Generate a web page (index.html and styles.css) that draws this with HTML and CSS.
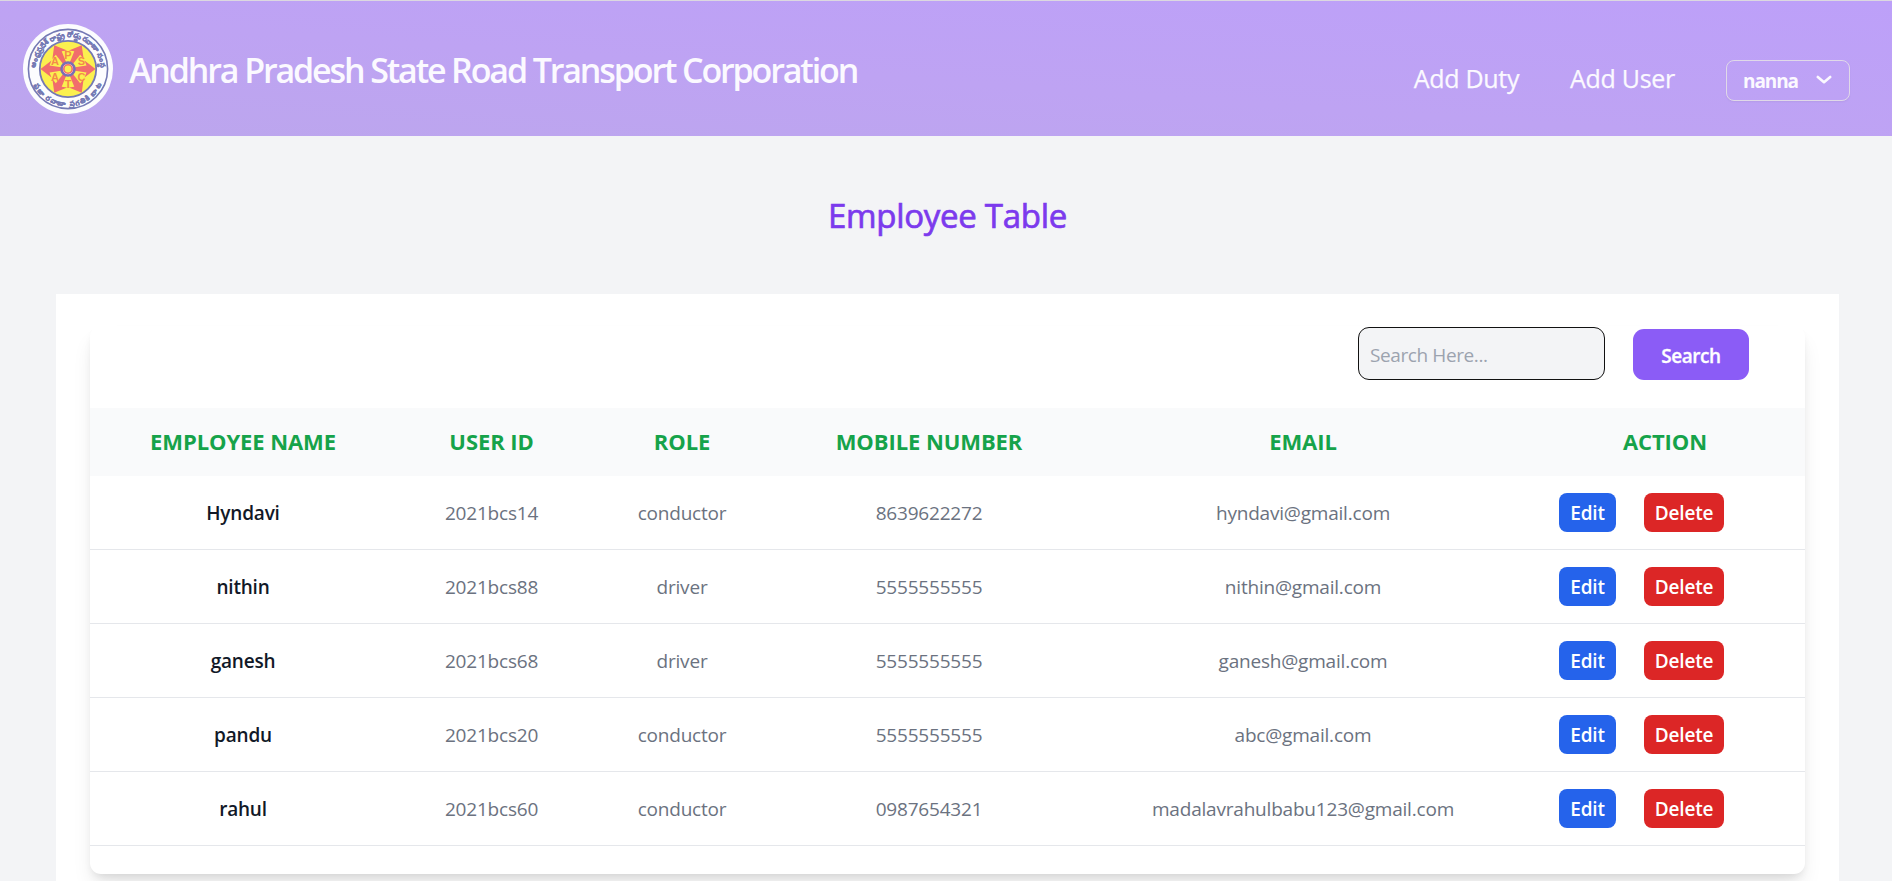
FILE: index.html
```html
<!DOCTYPE html>
<html lang="en">
<head>
<meta charset="utf-8">
<title>Employee Table</title>
<link rel="stylesheet" href="styles.css">
</head>
<body>
<header class="navbar">
  <a class="brand">
    <svg class="logo" viewBox="-45 -45 90 90" role="img" aria-label="APSRTC">
      <defs>
        <path id="arc-top" d="M-31.8 6 A32.3 32.3 0 1 1 31.8 6"/>
        <path id="arc-bottom" d="M-36.6 8 A37.5 37.5 0 0 0 36.6 8"/>
        <path id="arrow" d="M-1.8 -7 L-3.4 -18.5 L-8.5 -16.5 L0 -27.5 L8.5 -16.5 L3.4 -18.5 L1.8 -7 Z"/>
      </defs>
      <circle r="45" fill="#fcfcfe"/>
      <circle r="39.6" fill="none" stroke="#7479b4" stroke-width="1.6"/>
      <circle r="28.2" fill="#fbf04f" stroke="#7479b4" stroke-width="1.8"/>
      <g fill="#f16d6c">
        <use href="#arrow" transform="rotate(30)"/>
        <use href="#arrow" transform="rotate(90)"/>
        <use href="#arrow" transform="rotate(150)"/>
        <use href="#arrow" transform="rotate(210)"/>
        <use href="#arrow" transform="rotate(270)"/>
        <use href="#arrow" transform="rotate(330)"/>
      </g>
      <g class="logo-letters">
        <text x="0" y="-10.5">P</text>
        <text x="13.5" y="-4.5">S</text>
        <text x="-13" y="-4.5">A</text>
        <text x="13.5" y="11.5">C</text>
        <text x="0" y="18.5">T</text>
        <text x="-13" y="11.5">A</text>
      </g>
      <circle r="6.5" fill="#fff4ee" stroke="#7a6fb4" stroke-width="2.6"/>
      <circle r="4.2" fill="#fbf04f" stroke="#f16d6c" stroke-width="1.6"/>
      <text class="logo-ring"><textPath href="#arc-top" startOffset="50%" textLength="98">ఆంధ్రప్రదేశ్ రాష్ట్ర రోడ్డు రవాణా సంస్థ</textPath></text>
      <text class="logo-ring"><textPath href="#arc-bottom" startOffset="50%" textLength="84">ప్రజా రవాణా ప్రగతికి బాట</textPath></text>
    </svg>
    <span class="brand-name">Andhra Pradesh State Road Transport Corporation</span>
  </a>
  <nav class="nav">
    <a class="nav-link">Add Duty</a>
    <a class="nav-link">Add User</a>
    <button class="user-menu">nanna
      <svg class="chevron" viewBox="0 0 16 10"><path d="M1.8 2 L8 7.2 L14.2 2"/></svg>
    </button>
  </nav>
</header>
<main>
  <h1 class="page-title">Employee Table</h1>
  <section class="panel">
    <div class="card">
      <form class="toolbar">
        <input class="search-input" type="text" placeholder="Search Here...">
        <button class="search-btn" type="button">Search</button>
      </form>
      <table class="table">
        <colgroup><col class="c-name"><col class="c-id"><col class="c-role"><col class="c-mobile"><col class="c-email"><col class="c-action"></colgroup>
        <thead>
          <tr><th>EMPLOYEE NAME</th><th>USER ID</th><th>ROLE</th><th>MOBILE NUMBER</th><th>EMAIL</th><th>ACTION</th></tr>
        </thead>
        <tbody>
          <tr><td class="name">Hyndavi</td><td>2021bcs14</td><td>conductor</td><td>8639622272</td><td>hyndavi@gmail.com</td><td><div class="actions"><button class="btn edit">Edit</button><button class="btn delete">Delete</button></div></td></tr>
          <tr><td class="name">nithin</td><td>2021bcs88</td><td>driver</td><td>5555555555</td><td>nithin@gmail.com</td><td><div class="actions"><button class="btn edit">Edit</button><button class="btn delete">Delete</button></div></td></tr>
          <tr><td class="name">ganesh</td><td>2021bcs68</td><td>driver</td><td>5555555555</td><td>ganesh@gmail.com</td><td><div class="actions"><button class="btn edit">Edit</button><button class="btn delete">Delete</button></div></td></tr>
          <tr><td class="name">pandu</td><td>2021bcs20</td><td>conductor</td><td>5555555555</td><td>abc@gmail.com</td><td><div class="actions"><button class="btn edit">Edit</button><button class="btn delete">Delete</button></div></td></tr>
          <tr><td class="name">rahul</td><td>2021bcs60</td><td>conductor</td><td>0987654321</td><td>madalavrahulbabu123@gmail.com</td><td><div class="actions"><button class="btn edit">Edit</button><button class="btn delete">Delete</button></div></td></tr>
        </tbody>
      </table>
    </div>
  </section>
</main>
</body>
</html>
```
FILE: styles.css
```css
* { box-sizing: border-box; }
html, body { height: 100%; }
body {
  margin: 0;
  background: #f3f4f6;
  font-family: "Open Sans", "Noto Sans", sans-serif;
  font-size: 19px;
}
button, input { font: inherit; margin: 0; }

.navbar {
  display: flex;
  justify-content: space-between;
  height: 136px;
  padding: 0 42px 0 23px;
  border-top: 1px solid #dcd8e0;
  background: linear-gradient(to top right, #bca6ed, #bea3f3 45%, #bda0f9);
  color: #fbf9ff;
}
.brand { display: flex; align-items: center; gap: 16px; }
.logo { width: 90px; height: 90px; }
.logo-letters text {
  fill: #f58a4a;
  font: 700 11px "Liberation Sans", sans-serif;
  text-anchor: middle;
}
.logo-ring { fill: #7479b4; font-size: 7px; font-weight: 700; text-anchor: middle; stroke: #7479b4; stroke-width: 0.3px; }
.brand-name {
  padding-top: 2px;
  font-size: 34px;
  font-weight: 600;
  line-height: 40px;
  letter-spacing: -2.13px;
  white-space: nowrap;
}
.nav { display: flex; align-items: center; padding-top: 23px; }
.nav-link {
  margin-right: 51px;
  padding-bottom: 5px;
  font-size: 25px;
  -webkit-text-stroke: 0.25px currentColor;
  line-height: 34px;
  letter-spacing: -0.3px;
}
.user-menu {
  display: flex;
  align-items: center;
  justify-content: space-between;
  width: 124px;
  height: 41px;
  padding: 2px 17px 0 16px;
  border: 1px solid #e0d9e8;
  border-radius: 8px;
  background: transparent;
  box-shadow: 0 1px 2px rgba(0, 0, 0, 0.05);
  color: inherit;
  font-weight: 700;
  letter-spacing: -1.1px;
}
.chevron {
  width: 16px;
  height: 10px;
  margin-bottom: 2px;
  fill: none;
  stroke: currentColor;
  stroke-width: 2.6;
  stroke-linecap: round;
  stroke-linejoin: round;
}

.page-title {
  margin: 58px 0 0 3px;
  color: #7c3aed;
  font-size: 33px;
  font-weight: 400;
  -webkit-text-stroke: 0.7px currentColor;
  line-height: 44px;
  letter-spacing: -0.28px;
  text-align: center;
}
.panel {
  height: 587px;
  margin: 56px 53px 0 56px;
  padding: 32px 34px 0;
  background: #fff;
}
.card {
  height: 548px;
  border-radius: 11px;
  background: #fff;
  box-shadow: 0 14px 21px -4px rgba(0, 0, 0, 0.1), 0 5px 8px -3px rgba(0, 0, 0, 0.1);
}
.toolbar {
  display: flex;
  align-items: flex-end;
  justify-content: flex-end;
  gap: 28px;
  height: 82px;
  padding: 0 56px 28px 0;
}
.search-input {
  width: 247px;
  height: 53px;
  padding: 2px 11px 0;
  border: 1px solid #111;
  border-radius: 11px;
  background: #f3f4f6;
}
.search-input::placeholder { color: #9ca3af; opacity: 1; letter-spacing: -0.4px; }
.search-btn {
  width: 116px;
  height: 51px;
  padding: 2px 0 0;
  border: 0;
  border-radius: 11px;
  background: #8b5cf6;
  color: #fff;
  font-weight: 600;
  -webkit-text-stroke: 0.3px currentColor;
  letter-spacing: -0.45px;
}
.table { width: 1715px; table-layout: fixed; border-collapse: separate; border-spacing: 0; }
.c-name { width: 306px; }
.c-id { width: 191px; }
.c-role { width: 190px; }
.c-mobile { width: 304px; }
.c-email { width: 444px; }
.c-action { width: 280px; }
th, td { padding: 0; text-align: center; white-space: nowrap; }
th {
  height: 68px;
  padding-bottom: 2px;
  background: #f9fafb;
  color: #16a34a;
  font-size: 22px;
  font-weight: 700;
  letter-spacing: -0.08px;
}
td {
  height: 74px;
  border-bottom: 1px solid #e5e7eb;
  color: #6b7280;
  letter-spacing: -0.2px;
}
.name { color: #111827; font-weight: 600; }
.actions { display: flex; gap: 28px; padding-left: 34px; }
.btn {
  height: 39px;
  padding: 0;
  border: 0;
  border-radius: 8px;
  color: #fff;
  font-weight: 600;
  letter-spacing: -0.15px;
}
.edit { width: 57px; background: #2563eb; }
.delete { width: 80px; background: #dc2626; }
```
